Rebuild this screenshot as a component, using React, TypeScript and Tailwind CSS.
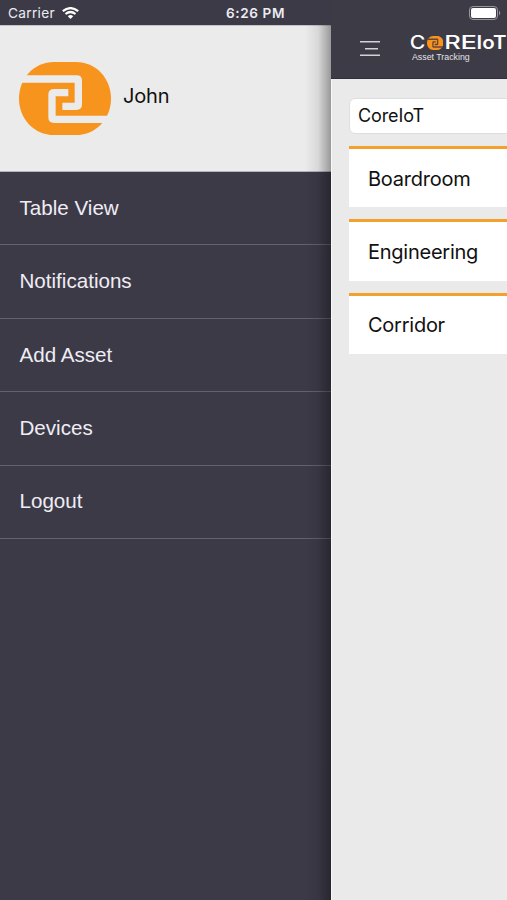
import React from "react";

const menuItems = ["Table View", "Notifications", "Add Asset", "Devices", "Logout"];
const rooms = ["Boardroom", "Engineering", "Corridor"];

function Emblem({ className, lines }: { className: string; lines: string }) {
  return (
    <svg className={className} viewBox="27 36 276 219" preserveAspectRatio="none" fill="none">
      <path
        d="M132 36H198C258 36 303 85 303 146C303 206 258 255 198 255H132C72 255 27 206 27 146C27 85 72 36 132 36Z"
        fill="#f7941d"
      />
      <path d="M20 87H200Q205 87 205 92V163Q205 169 199 169H157" stroke={lines} strokeWidth="22" />
      <path d="M310 208H132Q126 208 126 202V134Q126 128 132 128H175" stroke={lines} strokeWidth="22" />
    </svg>
  );
}

function StatusBar() {
  return (
    <div className="flex h-[25px] items-center bg-[#3d3a48] text-[#ecebf0]">
      <span className="mt-[3px] ml-[8px] w-[54px] font-['Inter',sans-serif] text-[13.7px] leading-none tracking-[0.3px]">Carrier</span>
      <svg className="mt-[1px] h-[12px] w-[17px]" viewBox="0 0 17 12" fill="none" stroke="#fff" strokeWidth="2.2">
        <path d="M.8 4.2Q8.5-2 16.2 4.2M3.5 7Q8.5 3 13.5 7" />
        <path d="M5.8 9.2Q8.5 7 11.2 9.2L8.5 12Z" fill="#fff" stroke="none" />
      </svg>
      <span className="mt-[3px] ml-[147px] font-['Inter',sans-serif] text-[13.6px] leading-none font-semibold tracking-[0.6px] whitespace-nowrap">6:26 PM</span>
    </div>
  );
}

function Drawer() {
  return (
    <aside className="relative flex w-[331px] shrink-0 flex-col bg-[#3d3a48]">
      <StatusBar />
      <div className="flex h-[147px] items-center border-t border-b border-t-[#c4c4c8] border-b-[#b5b4bb] bg-[#ebebeb] pl-[19px]">
        <Emblem className="h-[73px] w-[92px]" lines="#ebebeb" />
        <span className="mb-[5px] ml-[12px] font-['Inter',sans-serif] text-[20px] leading-none tracking-[-0.2px] text-[#111]">John</span>
      </div>
      <nav className="flex flex-col">
        {menuItems.map((item) => (
          <a key={item} className="flex h-[73.4px] items-center border-b border-[#64616d] pl-[19.5px] font-['Liberation_Sans',Arial,sans-serif] text-[20.6px] leading-none text-[#efedf4]">
            {item}
          </a>
        ))}
      </nav>
      <div className="absolute top-[25px] right-0 bottom-0 w-[26px] bg-linear-to-r from-transparent via-black/8 to-black/35" />
    </aside>
  );
}

function Brand() {
  return (
    <div className="ml-[29px] w-[98px] shrink-0">
      <div className="relative h-[18px]">
        <svg className="h-[18px] w-[98px] overflow-visible" viewBox="409 34 98 18" fill="#fff" fontFamily="Inter, sans-serif" fontWeight="500" fontSize="18">
          <text x="409.8" y="49.3" textLength="15.6" lengthAdjust="spacingAndGlyphs">C</text>
          <text x="444.2" y="49.3" textLength="16.5" lengthAdjust="spacingAndGlyphs">R</text>
          <text x="460.6" y="49.3" textLength="16.5" lengthAdjust="spacingAndGlyphs">E</text>
          <text x="476.5" y="49.3" textLength="30" lengthAdjust="spacingAndGlyphs" fontWeight="600">IoT</text>
        </svg>
        <Emblem className="absolute top-[2px] left-[17.5px] h-[14px] w-[16.5px]" lines="#66443a" />
      </div>
      <div className="ml-[3px] font-['Liberation_Sans',Arial,sans-serif] text-[8.8px] leading-[11px] whitespace-nowrap text-[#e4e3e8]">Asset Tracking</div>
    </div>
  );
}

function MainPanel() {
  return (
    <main className="flex w-[176px] shrink-0 flex-col overflow-hidden bg-[#eaeaea]">
      <header className="h-[79px] border-b border-[#302e38] bg-[#3d3b46]">
        <div className="flex h-[25px] items-start pt-[6px] pl-[138px]">
          <svg className="h-[14px] w-[33px]" viewBox="0 0 33 14">
            <rect x=".5" y=".5" width="28" height="13" rx="3.5" fill="none" stroke="#96949d" />
            <rect x="2" y="2" width="25" height="10" rx="2" fill="#fff" />
            <path d="M30 4.5Q32.5 7 30 9.5Z" fill="#96949d" />
          </svg>
        </div>
        <div className="flex pt-[9px]">
          <svg className="mt-[6px] ml-[29px] h-[17px] w-[20px] shrink-0" viewBox="0 0 20 17" stroke="#d2d1d6" strokeWidth="1.4">
            <path d="M0 1.8H20M5 8.7H18M0 15.3H20" />
          </svg>
          <Brand />
        </div>
      </header>
      <div className="flex grow flex-col border-l border-[#f8f8f8] pt-[19px] pl-[17px]">
        <div className="flex h-[36px] w-[200px] items-center rounded-[6px] border border-[#dedede] bg-white pl-[8px] font-['Inter',sans-serif] text-[18px] leading-none tracking-[-0.1px] text-[#111]">CoreIoT</div>
        <div className="mt-[12px] flex flex-col gap-[12px]">
          {rooms.map((room) => (
            <div key={room} className="flex h-[61.3px] w-[200px] items-center border-t-[3px] border-[#f3a02c] bg-white pt-[1px] pl-[19px] font-['Inter',sans-serif] text-[20px] leading-none tracking-[-0.25px] text-[#111]">{room}</div>
          ))}
        </div>
      </div>
    </main>
  );
}

export default function App() {
  return (
    <div className="flex h-[900px] w-[507px] overflow-hidden">
      <Drawer />
      <MainPanel />
    </div>
  );
}
